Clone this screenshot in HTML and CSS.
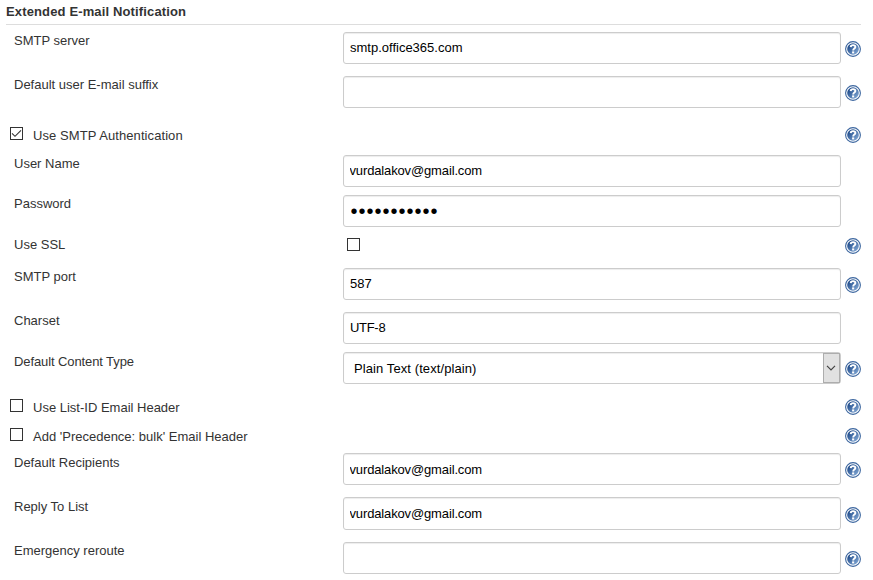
FILE: index.html
```
<!DOCTYPE html>
<html lang="en">
<head>
  <meta charset="UTF-8">
  <title>Extended E-mail Notification</title>
  <link rel="stylesheet" href="styles.css">
</head>
<body>
  <svg width="0" height="0" class="defs">
    <defs>
      <linearGradient id="disc" x1="0" y1="0" x2="1" y2="1">
        <stop offset="0.2" stop-color="#24508f"/>
        <stop offset="1" stop-color="#8db2dc"/>
      </linearGradient>
    </defs>
    <symbol id="help" viewBox="0 0 16 16">
      <circle cx="8" cy="8" r="7.4" fill="#fff" stroke="#3c669f" stroke-width="1.1"/>
      <circle cx="8" cy="8" r="5.8" fill="url(#disc)"/>
      <path d="M5.7 6.1C5.8 3.6 10.4 3.5 10.4 6C10.4 7.6 8.2 7.6 8.2 9.4" fill="none" stroke="#fff" stroke-width="1.9"/>
      <rect x="7.1" y="10.4" width="2.1" height="2" fill="#fff"/>
    </symbol>
  </svg>

  <form class="section">
    <h1 class="section-header">Extended E-mail Notification</h1>

    <div class="row">
      <label class="name">SMTP server</label>
      <input class="field raised" type="text" value="smtp.office365.com">
      <svg class="help"><use href="#help"/></svg>
    </div>
    <div class="row">
      <label class="name">Default user E-mail suffix</label>
      <input class="field" type="text">
      <svg class="help"><use href="#help"/></svg>
    </div>
    <div class="row check-row auth">
      <label class="check-label"><input class="check" type="checkbox" checked>Use SMTP Authentication</label>
      <svg class="help"><use href="#help"/></svg>
    </div>
    <div class="row short">
      <label class="name">User Name</label>
      <input class="field raised email" type="text" value="vurdalakov@gmail.com">
    </div>
    <div class="row short">
      <label class="name">Password</label>
      <input class="field password" type="password" value="abcdefghijk">
    </div>
    <div class="row ssl">
      <label class="name low">Use SSL</label>
      <input class="check" type="checkbox">
      <svg class="help"><use href="#help"/></svg>
    </div>
    <div class="row">
      <label class="name">SMTP port</label>
      <input class="field raised" type="text" value="587">
      <svg class="help"><use href="#help"/></svg>
    </div>
    <div class="row short">
      <label class="name">Charset</label>
      <input class="field raised charset" type="text" value="UTF-8">
    </div>
    <div class="row short">
      <label class="name low tight">Default Content Type</label>
      <div class="field select">
        <select class="select-list"><option>Plain Text (text/plain)</option></select>
        <span class="select-button">
          <svg width="10" height="6" viewBox="0 0 10 6"><path d="M1 0.8L5 4.8L9 0.8" fill="none" stroke="#444" stroke-width="1.2"/></svg>
        </span>
      </div>
      <svg class="help"><use href="#help"/></svg>
    </div>
    <div class="row check-row list-id">
      <label class="check-label"><input class="check" type="checkbox">Use List-ID Email Header</label>
      <svg class="help"><use href="#help"/></svg>
    </div>
    <div class="row check-row bulk">
      <label class="check-label"><input class="check" type="checkbox">Add 'Precedence: bulk' Email Header</label>
      <svg class="help"><use href="#help"/></svg>
    </div>
    <div class="row">
      <label class="name low">Default Recipients</label>
      <input class="field email" type="text" value="vurdalakov@gmail.com">
      <svg class="help"><use href="#help"/></svg>
    </div>
    <div class="row tall">
      <label class="name low">Reply To List</label>
      <input class="field email" type="text" value="vurdalakov@gmail.com">
      <svg class="help"><use href="#help"/></svg>
    </div>
    <div class="row short">
      <label class="name">Emergency reroute</label>
      <input class="field" type="text">
      <svg class="help"><use href="#help"/></svg>
    </div>
  </form>
</body>
</html>
```
FILE: styles.css
```
* {
  box-sizing: border-box;
}
body {
  margin: 0;
  background-color: #fff;
  color: #333;
  font-family: "Liberation Sans", Arial, sans-serif;
  font-size: 13px;
  line-height: 16px;
  overflow: hidden;
}
.defs {
  display: block;
}
.section {
  width: 855px;
  margin: 0 0 0 6px;
}
.section-header {
  height: 25px;
  margin: 0 0 7px;
  padding-top: 4px;
  border-bottom: 1px solid #ddd;
  font-size: 13px;
  font-weight: bold;
  letter-spacing: 0.14px;
  line-height: 16px;
}
.row {
  display: grid;
  grid-template-columns: 333px 498px 16px;
  column-gap: 4px;
  align-items: start;
  height: 44px;
}
.row.short {
  height: 40px;
}
.row.tall {
  height: 45px;
}
.row.ssl {
  height: 33px;
}
.row.auth {
  height: 35px;
}
.row.list-id {
  height: 29px;
}
.row.bulk {
  height: 32px;
}
.name {
  padding: 1px 0 0 8px;
}
.name.low {
  padding-top: 2px;
}
.name.tight {
  letter-spacing: -0.1px;
}
.field {
  width: 498px;
  height: 32px;
  padding: 0 6px;
  border: 1px solid #ccc;
  border-radius: 3px;
  background-color: #fff;
  box-shadow: inset 0 1px 1px rgba(0, 0, 0, 0.075);
  color: #000;
  font-family: inherit;
  font-size: 13px;
}
.field.raised {
  padding-bottom: 2px;
}
.field.email {
  padding-left: 5.5px;
  letter-spacing: -0.14px;
}
.field.charset {
  letter-spacing: -0.3px;
}
.tall .field {
  height: 33px;
}
.field.password {
  padding-left: 6.5px;
  font-size: 20px;
  letter-spacing: 1px;
}
.help {
  grid-column: 3;
  width: 16px;
  height: 16px;
  margin-top: 9px;
}
.tall .help {
  margin-top: 10px;
}
.ssl .help {
  margin-top: 3px;
}
.check-label {
  display: flex;
  grid-column: 1 / 3;
  padding: 7px 0 0 4px;
  line-height: 17px;
}
.check {
  appearance: none;
  width: 13px;
  height: 13px;
  margin: 0 10px 0 0;
  border: 1px solid #333;
  background-color: #fff;
}
.check:checked {
  background: url("data:image/svg+xml,%3Csvg xmlns='http://www.w3.org/2000/svg' viewBox='0 0 11 11'%3E%3Cpath d='M1 5.3L4 8.3L10 2.3' fill='none' stroke='%23333' stroke-width='1.1'/%3E%3C/svg%3E");
}
.auth .check-label {
  letter-spacing: 0.08px;
}
.ssl .check {
  margin: 3px 0 0 4px;
}
.check-row .help {
  margin-top: 7px;
}
.select {
  display: flex;
  padding: 0;
}
.select-list {
  flex: 1;
  appearance: none;
  padding: 0 10px;
  border: 0;
  background: none;
  color: #000;
  font-family: inherit;
  font-size: 13px;
  letter-spacing: 0.09px;
}
.select-button {
  display: flex;
  align-items: center;
  justify-content: center;
  width: 17px;
  padding-right: 1px;
  border: 1px solid #adadad;
  background-color: #e1e1e1;
}
```
